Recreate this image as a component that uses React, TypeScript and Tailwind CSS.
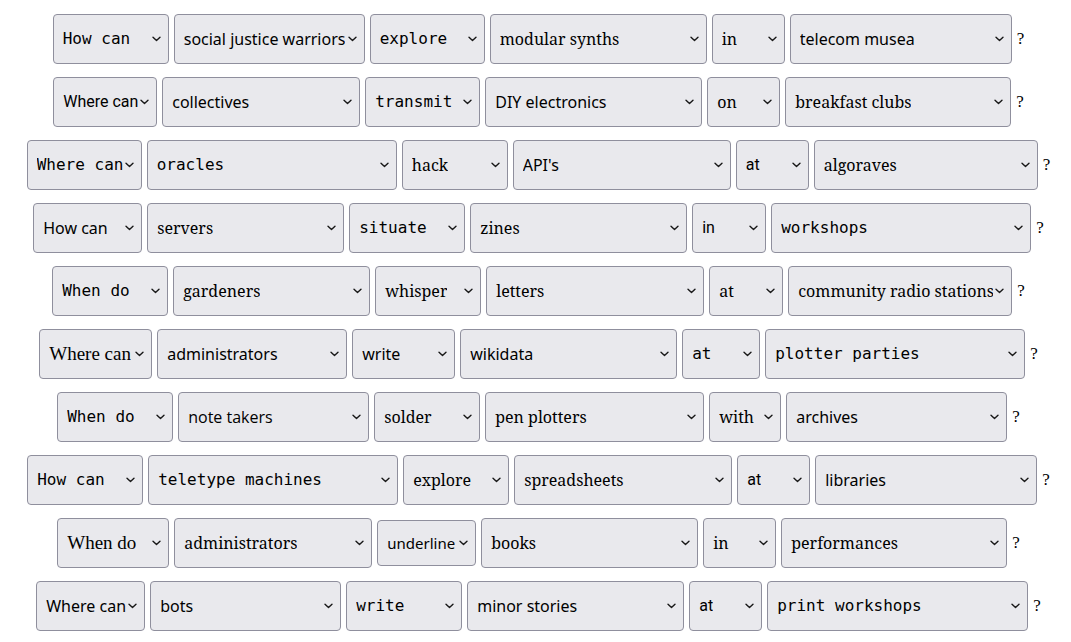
import React from "react";

type F = "m" | "s" | "r" | "o" | "se" | "t" | "u";

const FONTS: Record<F, string> = {
  m: "font-['DejaVu_Sans_Mono',monospace] text-[16px] h-[50px]",
  s: "font-['Noto_Sans',sans-serif] text-[16px] h-[50px]",
  r: "font-['Roboto',sans-serif] text-[16px] h-[50px]",
  o: "font-['Open_Sans',sans-serif] text-[16px] h-[50px]",
  se: "font-['Noto_Serif',serif] text-[16px] h-[50px]",
  t: "font-['Liberation_Serif',serif] text-[19px] h-[50px]",
  u: "font-['Noto_Sans',sans-serif] text-[15px] h-[46px]",
};

type Cell = [string, F, number];

const ROWS: Cell[][] = [
  [["How can", "m", 116], ["social justice warriors", "s", 191], ["explore", "m", 115], ["modular synths", "se", 217], ["in", "se", 73], ["telecom musea", "s", 222]],
  [["Where can", "r", 104], ["collectives", "s", 198], ["transmit", "m", 115], ["DIY electronics", "s", 217], ["on", "se", 73], ["breakfast clubs", "se", 226]],
  [["Where can", "m", 115], ["oracles", "m", 250], ["hack", "se", 106], ["API's", "s", 218], ["at", "r", 73], ["algoraves", "se", 224]],
  [["How can", "s", 109], ["servers", "se", 197], ["situate", "m", 116], ["zines", "se", 217], ["in", "r", 74], ["workshops", "m", 260]],
  [["When do", "m", 116], ["gardeners", "se", 197], ["whisper", "se", 106], ["letters", "se", 218], ["at", "se", 74], ["community radio stations", "se", 224]],
  [["Where can", "t", 113], ["administrators", "s", 190], ["write", "s", 103], ["wikidata", "s", 217], ["at", "m", 78], ["plotter parties", "m", 260]],
  [["When do", "m", 116], ["note takers", "o", 191], ["solder", "se", 106], ["pen plotters", "se", 219], ["with", "se", 72], ["archives", "s", 221]],
  [["How can", "m", 116], ["teletype machines", "m", 250], ["explore", "se", 106], ["spreadsheets", "se", 218], ["at", "r", 73], ["libraries", "s", 222]],
  [["When do", "t", 112], ["administrators", "se", 198], ["underline", "u", 99], ["books", "se", 217], ["in", "se", 73], ["performances", "se", 226]],
  [["Where can", "s", 109], ["bots", "s", 191], ["write", "m", 116], ["minor stories", "s", 217], ["at", "r", 73], ["print workshops", "m", 261]],
];

function Chevron() {
  return (
    <svg width="9" height="6" viewBox="0 0 9 6" className="shrink-0">
      <path d="M1 1.2 L4.5 4.6 L8 1.2" fill="none" stroke="#1a1a1a" strokeWidth="1.4" strokeLinecap="round" strokeLinejoin="round" />
    </svg>
  );
}

function Sel({ cell }: { cell: Cell }) {
  const [text, f, w] = cell;
  return (
    <div
      className={`${FONTS[f]} flex items-center justify-between gap-[2px] rounded-[4px] border border-[#8f8f9d] bg-[#e9e9ed] pl-[9px] pr-[7px] text-black shrink-0 whitespace-nowrap overflow-hidden`}
      style={{ width: w }}
    >
      <span className="overflow-hidden">{text}</span>
      <Chevron />
    </div>
  );
}

export default function App() {
  return (
    <div className="min-h-[642px] w-[1071px] bg-white pt-[14px] pl-[6px] flex flex-col gap-[13px]">
      {ROWS.map((row, i) => (
        <div key={i} className="flex items-center justify-center gap-[5px]">
          {row.map((c, j) => (
            <Sel key={j} cell={c} />
          ))}
          <span className="font-['Liberation_Serif',serif] text-[17px] text-black">?</span>
        </div>
      ))}
    </div>
  );
}
